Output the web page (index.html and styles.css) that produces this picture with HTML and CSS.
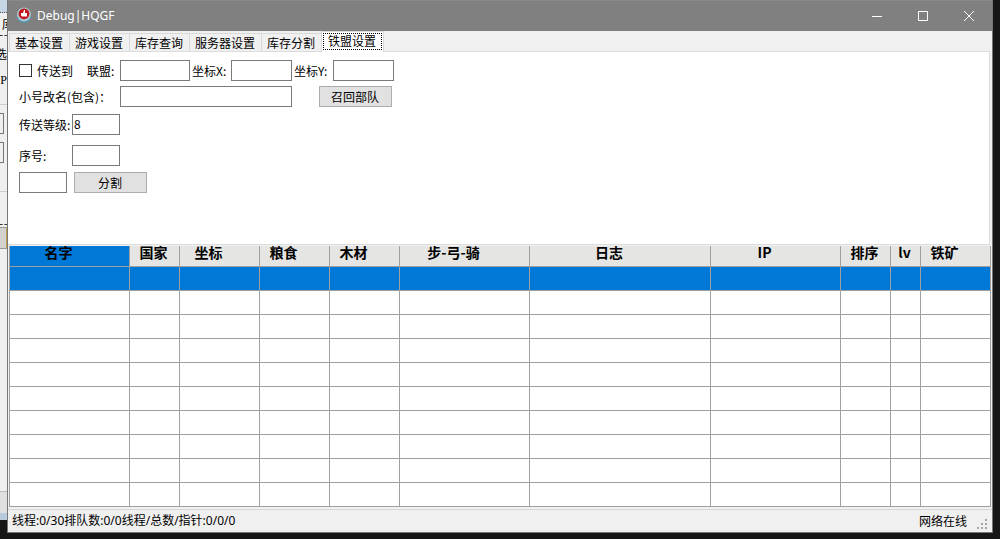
FILE: index.html
```
<!DOCTYPE html>
<html lang="zh-CN">
<head>
<meta charset="utf-8">
<title>Debug|HQGF</title>
<link rel="stylesheet" href="styles.css">
</head>
<body>
<div class="desktop">
  <div class="behind" aria-hidden="true">
    <div class="behind-title"></div>
    <div class="behind-tab">库</div>
    <div class="behind-body">
      <div class="behind-text">选</div>
      <div class="behind-text mono">P</div>
      <div class="behind-line"></div>
      <div class="behind-box"></div>
      <div class="behind-box"></div>
      <div class="behind-line low"></div>
      <div class="behind-dots"></div>
      <div class="behind-header"></div>
    </div>
    <div class="behind-status"></div>
    <div class="behind-edge"></div>
  </div>
  <main class="window">
    <header class="titlebar">
      <svg class="logo" viewBox="0 0 16 16" aria-hidden="true">
        <circle cx="8" cy="9" r="7" fill="#4f93a8"/>
        <circle cx="8" cy="7.500" r="7" fill="#a9c6d0"/>
        <circle cx="8" cy="6.800" r="5.400" fill="#c4141c"/>
        <path d="M5 6h2l1-3h1v3h2v3.500H6L5 8.500z" fill="#fff"/>
      </svg>
      <h1 class="title">Debug|HQGF</h1>
      <button class="caption" aria-label="最小化"><svg viewBox="0 0 10 10"><path d="M0 5.500h10"/></svg></button>
      <button class="caption" aria-label="最大化"><svg viewBox="0 0 10 10"><path d="M.5.5h9v9h-9z"/></svg></button>
      <button class="caption" aria-label="关闭"><svg viewBox="0 0 10 10"><path d="M0 0l10 10M10 0L0 10"/></svg></button>
    </header>
    <nav class="tabs" role="tablist">
      <button class="tab" role="tab">基本设置</button>
      <button class="tab" role="tab">游戏设置</button>
      <button class="tab" role="tab">库存查询</button>
      <button class="tab" role="tab">服务器设置</button>
      <button class="tab" role="tab">库存分割</button>
      <button class="tab active" role="tab" aria-selected="true"><span class="focus">铁盟设置</span></button>
    </nav>
    <form class="page">
      <div class="row">
        <label class="send"><input class="check" type="checkbox">传送到</label>
        <label class="lab-union" for="union">联盟:</label>
        <input class="box w70" id="union" type="text">
        <label class="lab-coord" for="cx">坐标X:</label>
        <input class="box w60" id="cx" type="text">
        <label class="lab-coord" for="cy">坐标Y:</label>
        <input class="box w60" id="cy" type="text">
      </div>
      <div class="row gap5">
        <label class="lab-name" for="rename">小号改名(包含)：</label>
        <input class="box w172" id="rename" type="text">
        <button class="btn recall" type="button">召回部队</button>
      </div>
      <div class="row gap7">
        <label class="lab-level" for="level">传送等级:</label>
        <input class="box w48" id="level" type="text" value="8">
      </div>
      <div class="row gap10">
        <label class="lab-level" for="serial">序号:</label>
        <input class="box w48" id="serial" type="text">
      </div>
      <div class="row gap6">
        <input class="box w48" type="text" aria-label="分割数">
        <button class="btn split" type="button">分割</button>
      </div>
    </form>
    <table class="grid">
      <colgroup><col class="c120"><col class="c50"><col class="c80"><col class="c70"><col class="c70"><col class="c130"><col><col class="c130"><col class="c50"><col class="c30"><col class="c70"></colgroup>
      <thead>
        <tr><th class="sort current">名字</th><th>国家</th><th class="sort">坐标</th><th class="sort">粮食</th><th class="sort">木材</th><th class="sort">步-弓-骑</th><th class="sort">日志</th><th class="sort">IP</th><th>排序</th><th>lv</th><th class="sort">铁矿</th></tr>
      </thead>
      <tbody>
        <tr class="selected"><td></td><td></td><td></td><td></td><td></td><td></td><td></td><td></td><td></td><td></td><td></td></tr>
        <tr><td></td><td></td><td></td><td></td><td></td><td></td><td></td><td></td><td></td><td></td><td></td></tr>
        <tr><td></td><td></td><td></td><td></td><td></td><td></td><td></td><td></td><td></td><td></td><td></td></tr>
        <tr><td></td><td></td><td></td><td></td><td></td><td></td><td></td><td></td><td></td><td></td><td></td></tr>
        <tr><td></td><td></td><td></td><td></td><td></td><td></td><td></td><td></td><td></td><td></td><td></td></tr>
        <tr><td></td><td></td><td></td><td></td><td></td><td></td><td></td><td></td><td></td><td></td><td></td></tr>
        <tr><td></td><td></td><td></td><td></td><td></td><td></td><td></td><td></td><td></td><td></td><td></td></tr>
        <tr><td></td><td></td><td></td><td></td><td></td><td></td><td></td><td></td><td></td><td></td><td></td></tr>
        <tr><td></td><td></td><td></td><td></td><td></td><td></td><td></td><td></td><td></td><td></td><td></td></tr>
        <tr><td></td><td></td><td></td><td></td><td></td><td></td><td></td><td></td><td></td><td></td><td></td></tr>
      </tbody>
    </table>
    <footer class="status">
      <span class="counts">线程:0/30排队数:0/0线程/总数/指针:0/0/0</span>
      <span class="online">网络在线</span>
      <svg class="grip" viewBox="0 0 12 12" aria-hidden="true"><path fill="#a8a8a8" d="M8 0h2v2H8zM4 4h2v2H4zM8 4h2v2H8zM0 8h2v2H0zM4 8h2v2H4zM8 8h2v2H8z"/></svg>
    </footer>
  </main>
</div>
</body>
</html>
```
FILE: styles.css
```
* { box-sizing: border-box; }
body {
  margin: 0;
  background: #161616;
  color: #000;
  font: 12px/16px "Noto Sans CJK SC", sans-serif;
}
button, input { font: inherit; color: inherit; }
.desktop {
  display: grid;
  grid-template-columns: 7px 1fr 7px;
  align-items: start;
  min-height: 100vh;
}

/* Sliver of the second window at the left edge */
.behind { display: flex; flex-direction: column; height: 520px; overflow: hidden; background: #efefef; }
.behind-title { height: 13px; background: #c5d5e3; border-bottom: 1px dotted #555; }
.behind-tab { height: 23px; padding-top: 3px; border-bottom: 1px dashed #333; padding-left: 2px; }
.behind-body { flex: 1; display: flex; flex-direction: column; }
.behind-text { height: 26px; padding-top: 10px; direction: rtl; }
.mono { font-family: "Liberation Serif", serif; }
.behind-line { height: 1px; margin-top: 16px; background: #ccc; }
.behind-box { height: 21px; margin-top: 8px; margin-right: 3px; border: 1px solid #777; border-left: 0; flex: none; }
.behind-line.low { margin-top: 28px; }
.behind-dots { margin-top: 32px; border-bottom: 1px dashed #333; }
.behind-header { height: 22px; margin-top: 2px; background: #d4d2cf; border: 1px solid #999; border-width: 1px 0; border-right: 1px solid #c0a050; }
.behind-status { height: 22px; background: #e0e0e0; border-top: 1px solid #bbb; }
.behind-edge { height: 7px; background: #b8cbdc; }

.window { background: #f0f0f0; border: 1px solid #777; border-top: 0; }
.titlebar { display: flex; align-items: center; height: 31px; padding-left: 8px; background: #808080; border-top: 1px solid #8a8a8a; color: #fff; }
.logo { width: 16px; height: 16px; margin-bottom: 2px; }
.title { flex: 1; margin: 0 0 0 5px; font: 12px/16px "Noto Sans", sans-serif; }
.caption { display: flex; align-items: center; justify-content: center; width: 46px; height: 28px; padding: 0; border: 0; background: none; }
.caption svg { width: 10px; height: 10px; fill: none; stroke: #fff; stroke-width: 1; }

.tabs { display: flex; align-items: flex-end; height: 20px; padding-left: 1px; }
.tab { height: 18px; padding: 0 6px 0 5px; border: 0; border-top: 1px solid #d9d9d9; border-left: 1px solid #d9d9d9; background: #f0f0f0; line-height: 18px; white-space: nowrap; }
.tab.active { z-index: 1; height: 21px; margin-bottom: -1px; padding: 1px 1px 2px; border-right: 1px solid #d9d9d9; background: #fff; }
.focus { display: block; height: 17px; padding: 0 5px 0 4px; border: 1px dotted #000; line-height: 13px; }

.page { min-height: 194px; margin-right: 2px; padding: 8px 10px; background: #fff; border: 1px solid #dcdcdc; border-left: 0; padding-left: 11px; }
.row { display: flex; align-items: center; }
.gap5 { margin-top: 5px; }
.gap6 { margin-top: 6px; }
.gap7 { margin-top: 7px; }
.gap10 { margin-top: 10px; }
.row label { white-space: nowrap; }
.send { display: flex; align-items: center; width: 68px; }
.check { appearance: none; width: 13px; height: 13px; margin: 0 5px 0 0; border: 1px solid #333; background: #fff; }
.lab-union { width: 33px; }
.lab-coord { width: 41px; padding-left: 2px; }
.lab-name { width: 101px; }
.lab-level { width: 53px; }
.box { height: 21px; padding: 0 1px 3px; border: 1px solid #7a7a7a; border-radius: 0; background: #fff; }
.w48 { width: 48px; }
.w60 { width: 61px; }
.w70 { width: 70px; }
.w172 { width: 172px; }
.btn { width: 73px; height: 21px; padding: 0 1px 0 0; border: 1px solid #adadad; background: #e1e1e1; line-height: 19px; }
.recall { margin-left: 27px; }
.split { margin-left: 7px; }

.grid { table-layout: fixed; width: calc(100% - 2px); margin: 1px 1px 0; border-collapse: separate; border-spacing: 0; border-left: 1px solid #a0a0a0; background: #fff; }
.c30 { width: 30px; }
.c50 { width: 50px; }
.c70 { width: 70px; }
.c80 { width: 80px; }
.c120 { width: 120px; }
.c130 { width: 130px; }
.grid th, .grid td { padding: 0; border: solid #a0a0a0; border-width: 0 1px 1px 0; }
.grid th { height: 21px; padding-right: 2px; background: #e5e5e3; font-size: 14px; line-height: 12px; vertical-align: top; white-space: nowrap; }
.grid .sort { padding-right: 22px; }
.grid td { height: 24px; }
.grid .current, .selected td { background: #0078d7; }

.status { display: flex; align-items: center; height: 23px; margin-top: 2px; padding: 0 3px 0 4px; border-top: 1px solid #d7d7d7; }
.counts { flex: 1; font-family: "Noto Sans", "Noto Sans CJK SC", sans-serif; }
.grip { width: 12px; height: 12px; margin: 8px 0 0 10px; }
```
